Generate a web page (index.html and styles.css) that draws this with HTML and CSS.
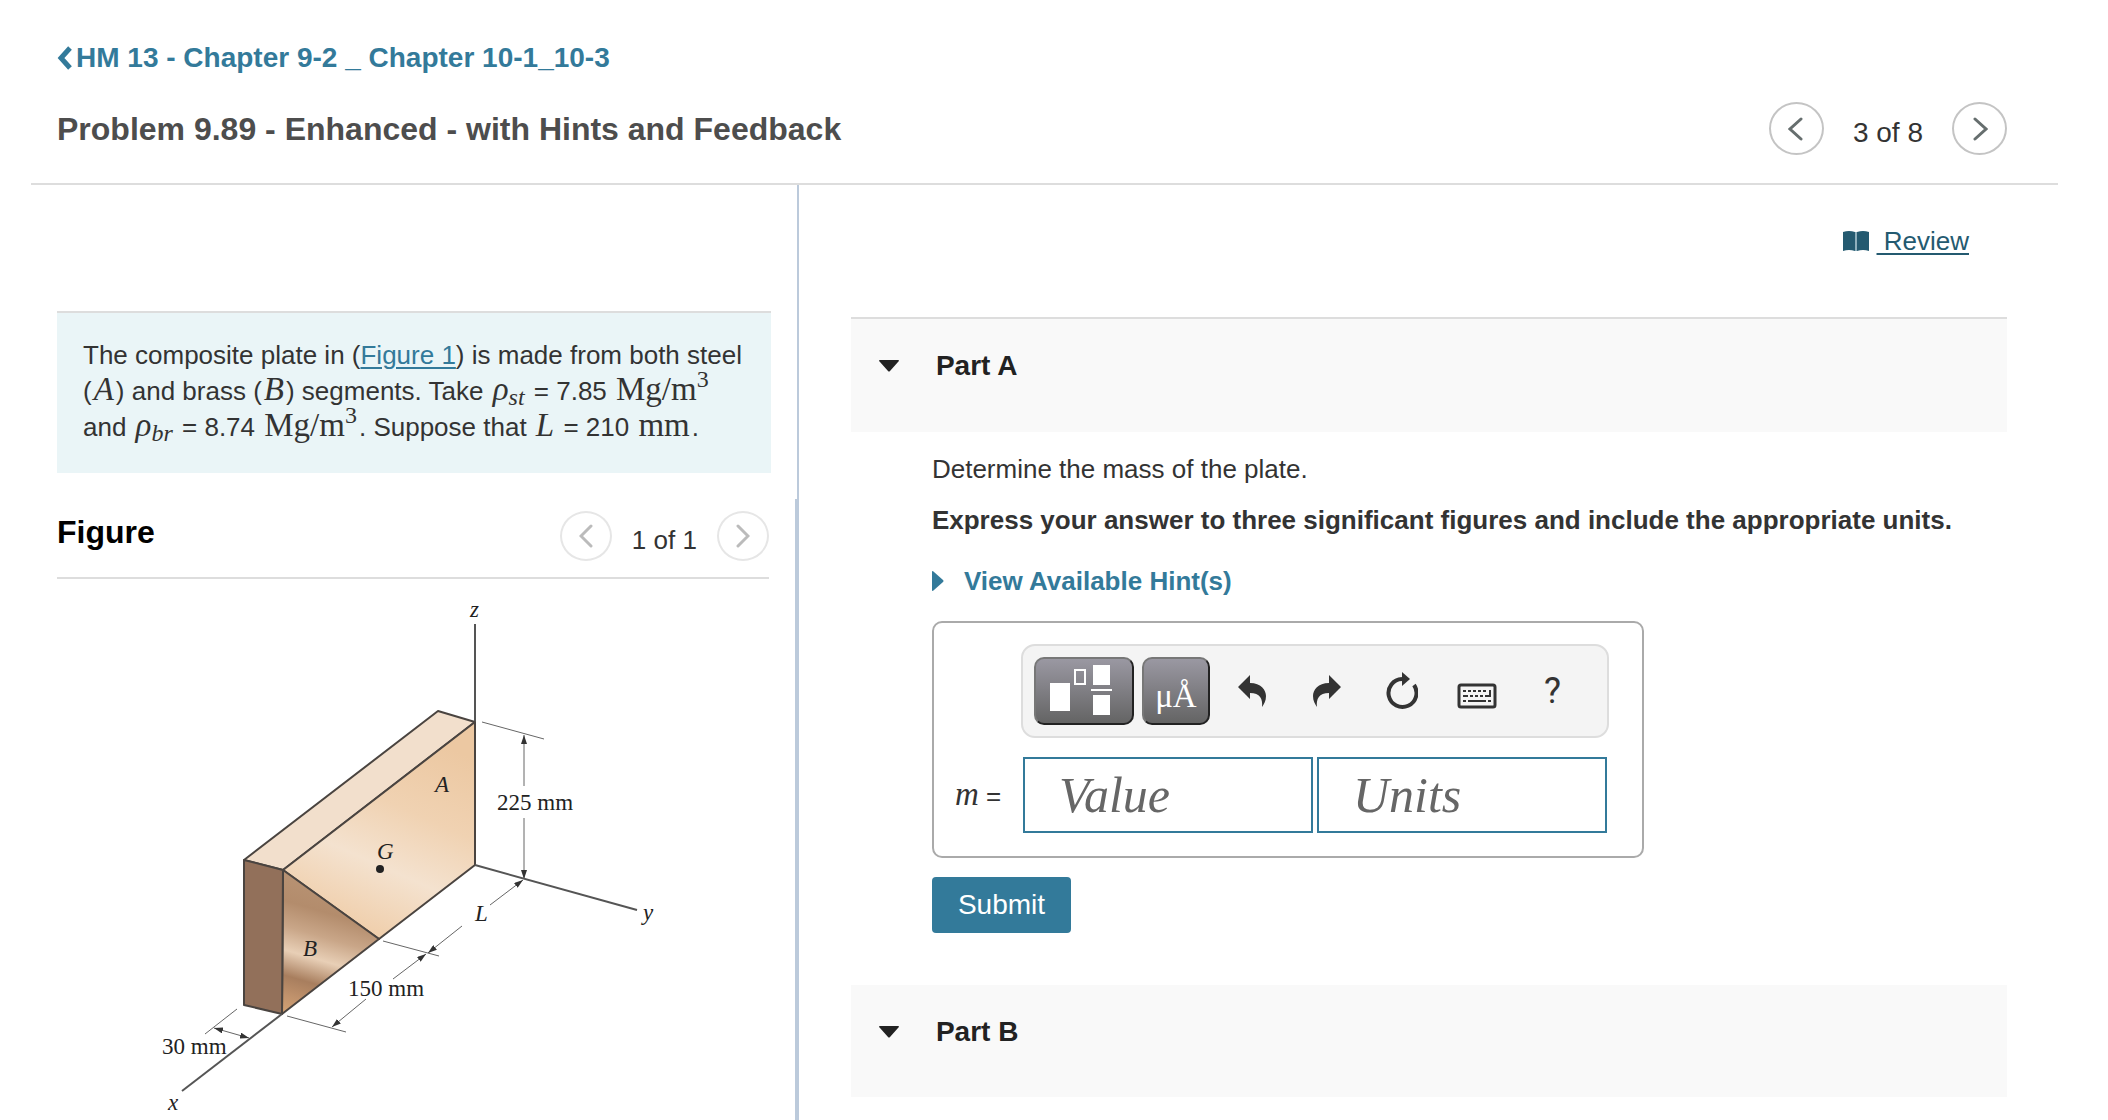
FILE: index.html
```html
<!DOCTYPE html>
<html lang="en">

<head>
    <meta charset="UTF-8">
    <meta name="viewport" content="width=device-width, initial-scale=1.0">
    <title>Problem 9.89 - Enhanced - with Hints and Feedback</title>
    <link rel="stylesheet" href="styles.css">
</head>

<body>

    <header class="header">
        <a class="back" href="#">
            <svg width="16" height="24" viewBox="0 0 16 24"><path d="M13 2L4 12l9 10" fill="none" stroke="currentColor" stroke-width="5"/></svg>
            <span>HM 13 - Chapter 9-2 _ Chapter 10-1_10-3</span>
        </a>
        <div class="title-row">
            <h1 class="title">Problem 9.89 - Enhanced - with Hints and Feedback</h1>
            <nav class="pager">
                <button class="round" type="button" aria-label="Previous item">
                    <svg width="16" height="24" viewBox="0 0 16 24"><path d="M13 2L2 12l11 10"/></svg>
                </button>
                <span class="pager-text">3 of 8</span>
                <button class="round" type="button" aria-label="Next item">
                    <svg width="16" height="24" viewBox="0 0 16 24"><path d="M3 2l11 10L3 22"/></svg>
                </button>
            </nav>
        </div>
    </header>

    <main class="main">
        <!-- left: problem text and figure -->
        <section class="left">
            <div class="problem">
                The composite plate in (<a href="#figure">Figure 1</a>) is made from both steel
                (<i class="math">A</i>) and brass (<i class="math">B</i>) segments. Take <i class="math rho">ρ<sub>st</sub></i> = 7.85 <span class="math">Mg/m<sup>3</sup></span>
                and <i class="math rho">ρ<sub>br</sub></i> = 8.74 <span class="math">Mg/m<sup>3</sup></span>. Suppose that <i class="math">L</i> = 210 <span class="math">mm</span>.
            </div>

            <div class="figure-area" id="figure">
                <div class="figure-head">
                    <h2 class="figure-title">Figure</h2>
                    <nav class="pager small">
                        <button class="round" type="button" aria-label="Previous figure" disabled>
                            <svg width="14" height="24" viewBox="0 0 14 24"><path d="M12 2L2 12l10 10"/></svg>
                        </button>
                        <span class="pager-text">1 of 1</span>
                        <button class="round" type="button" aria-label="Next figure" disabled>
                            <svg width="14" height="24" viewBox="0 0 14 24"><path d="M2 2l10 10L2 22"/></svg>
                        </button>
                    </nav>
                </div>

                <svg class="figure" width="560" height="540" viewBox="0 0 560 540" role="img" aria-label="Composite plate">
                    <defs>
                        <linearGradient id="steel" gradientUnits="userSpaceOnUse" x1="300" y1="165" x2="200" y2="390">
                            <stop offset="0" stop-color="#ecc8a2"/>
                            <stop offset="0.3" stop-color="#f0d2b2"/>
                            <stop offset="0.55" stop-color="#f4e2cf"/>
                            <stop offset="0.8" stop-color="#f0d0ae"/>
                            <stop offset="1" stop-color="#ecc8a4"/>
                        </linearGradient>
                        <linearGradient id="brass" gradientUnits="userSpaceOnUse" x1="165" y1="290" x2="125" y2="428">
                            <stop offset="0" stop-color="#b99475"/>
                            <stop offset="0.25" stop-color="#b38c6c"/>
                            <stop offset="0.42" stop-color="#c9a688"/>
                            <stop offset="0.58" stop-color="#e8cfb6"/>
                            <stop offset="0.75" stop-color="#a87e5e"/>
                            <stop offset="0.88" stop-color="#c0926c"/>
                            <stop offset="1" stop-color="#d2a274"/>
                        </linearGradient>
                        <marker id="arrow" viewBox="0 0 9 6" refX="9" refY="3" markerWidth="9" markerHeight="6" markerUnits="userSpaceOnUse" orient="auto-start-reverse">
                            <path d="M0 0l9 3-9 3z" fill="#333"/>
                        </marker>
                    </defs>

                    <!-- plate -->
                    <g stroke="#4a4440" stroke-width="2" stroke-linejoin="round">
                        <path d="M104 281L298 132l37 11-192 148z" fill="#f2dfcc"/>
                        <path d="M143 291L335 143v143l-96 74z" fill="url(#steel)"/>
                        <path d="M143 291l96 69-97 75z" fill="url(#brass)"/>
                        <path d="M104 281l39 10-1 144-38-9z" fill="#92705a"/>
                    </g>

                    <!-- axes -->
                    <g class="axis">
                        <path d="M335 45v97"/>
                        <path d="M335 286l162 45"/>
                        <path d="M142 435L42 512"/>
                    </g>

                    <!-- dimension lines -->
                    <g class="dim">
                        <path d="M342 143l62 17M243 362l56 15M147 437l59 16M97 430l-32 25"/>
                        <path d="M384 207v-51" marker-end="url(#arrow)"/>
                        <path d="M384 239v61" marker-end="url(#arrow)"/>
                        <path d="M350 326l33-25" marker-end="url(#arrow)"/>
                        <path d="M322 347l-34 27" marker-end="url(#arrow)"/>
                        <path d="M253 400l33-25" marker-end="url(#arrow)"/>
                        <path d="M226 420l-34 28" marker-end="url(#arrow)"/>
                        <path d="M74 449l35 10" marker-start="url(#arrow)" marker-end="url(#arrow)"/>
                    </g>

                    <circle cx="240" cy="290" r="4" fill="#222"/>
                    <g class="label">
                        <text x="357" y="231">225 mm</text>
                        <text x="208" y="417">150 mm</text>
                        <text x="22" y="475">30 mm</text>
                        <g font-style="italic">
                            <text x="330" y="38">z</text>
                            <text x="503" y="341">y</text>
                            <text x="28" y="531">x</text>
                            <text x="295" y="213">A</text>
                            <text x="237" y="280">G</text>
                            <text x="163" y="377">B</text>
                            <text x="335" y="342">L</text>
                        </g>
                    </g>
                </svg>
            </div>
        </section>

        <!-- right: question parts -->
        <section class="right">
            <div class="review">
                <svg width="26" height="22" viewBox="0 0 26 22"><path d="M0 2q6-2 12 0v19q-6-2-12 0zM14 2q6-2 12 0v19q-6-2-12 0z" fill="#245a70"/><path d="M13 2v19" stroke="#8fb0bd" stroke-width="2"/></svg>
                <a href="#">&nbsp;Review</a>
            </div>

            <div class="part part-a">
                <button class="part-head" type="button">
                    <svg width="20" height="12" viewBox="0 0 20 12"><path d="M1 0h18q2 0 0 2l-8 9q-1 1-2 0L1 2q-2-2 0-2z" fill="#222"/></svg>
                    <span>Part A</span>
                </button>
            </div>

            <form class="question">
                <p class="ask">Determine the mass of the plate.</p>
                <p class="ask"><b>Express your answer to three significant figures and include the appropriate units.</b></p>
                <button class="hints" type="button">
                    <svg width="12" height="20" viewBox="0 0 12 20"><path d="M0 1q0-2 2 0l9 8q1 1 0 2l-9 8q-2 2-2 0z" fill="currentColor"/></svg>
                    <span>View Available Hint(s)</span>
                </button>

                <div class="answer">
                    <div class="toolbar">
                        <button class="key key-wide" type="button" aria-label="Templates">
                            <svg width="68" height="54" viewBox="0 0 68 54">
                                <path d="M0 19h20v28H0zM43 1h17v20H43zM43 31h17v20H43zM41 25h21v2H41z" fill="#fff"/>
                                <path d="M25 6h10v14H25z" fill="none" stroke="#fff" stroke-width="2"/>
                            </svg>
                        </button>
                        <button class="key key-text" type="button" aria-label="Symbols">μÅ</button>
                        <button class="tool" type="button" aria-label="Undo">
                            <svg width="28" height="32" viewBox="0 0 28 32"><path d="M0 12L12 0v8c11 0 16 7 16 13 0 5-2 8-4 11 1-8-2-14-12-14v6z"/></svg>
                        </button>
                        <button class="tool" type="button" aria-label="Redo">
                            <svg width="28" height="32" viewBox="0 0 28 32"><path d="M28 12L16 0v8C5 8 0 15 0 21c0 5 2 8 4 11-1-8 2-14 12-14v6z"/></svg>
                        </button>
                        <button class="tool" type="button" aria-label="Reset">
                            <svg width="32" height="38" viewBox="0 0 32 38"><path d="M16 7a14 14 0 1 0 12 6" fill="none" stroke="#333" stroke-width="4"/><path d="M16 0l8 7-8 7z"/></svg>
                        </button>
                        <button class="tool" type="button" aria-label="Keyboard shortcuts">
                            <svg width="40" height="36" viewBox="0 0 40 36">
                                <rect x="2" y="12" width="36" height="22" rx="2" fill="none" stroke="#333" stroke-width="3"/>
                                <path d="M6 18h3M11 18h3M16 18h3M21 18h3M26 18h3" stroke="#333" stroke-width="2"/>
                                <path d="M6 23h5M13 23h3M18 23h3M23 23h3M28 23h5v-6" fill="none" stroke="#333" stroke-width="2"/>
                                <path d="M6 28h3M11 28h18M31 28h3" stroke="#333" stroke-width="2"/>
                            </svg>
                        </button>
                        <button class="tool help" type="button" aria-label="Help">?</button>
                    </div>

                    <label class="symbol" for="value"><i>m</i> =</label>
                    <div class="fields">
                        <input class="field" id="value" type="text" placeholder="Value">
                        <input class="field" type="text" placeholder="Units" aria-label="Units">
                    </div>
                </div>

                <button class="submit" type="submit">Submit</button>
            </form>

            <div class="part">
                <button class="part-head" type="button">
                    <svg width="20" height="12" viewBox="0 0 20 12"><path d="M1 0h18q2 0 0 2l-8 9q-1 1-2 0L1 2q-2-2 0-2z" fill="#222"/></svg>
                    <span>Part B</span>
                </button>
            </div>
        </section>
    </main>

</body>

</html>
```
FILE: styles.css
```css
* {
    box-sizing: border-box;
}
body {
    margin: 0;
    height: 100vh;
    display: flex;
    flex-direction: column;
    overflow: hidden;
    font-family: "Liberation Sans", Arial, sans-serif;
    font-size: 26px;
    line-height: 36px;
    color: #333;
    background-color: #fff;
}
button {
    padding: 0;
    border: 0;
    background: none;
    font: inherit;
    color: inherit;
    cursor: pointer;
}
svg {
    display: block;
}

/* header */
.header {
    flex: none;
    margin: 0 50px 0 31px;
    padding: 40px 51px 28px 26px;
    border-bottom: 2px solid #ddd;
}
.back {
    display: inline-flex;
    align-items: center;
    gap: 3px;
    font-size: 28px;
    font-weight: bold;
    color: #337a9a;
    text-decoration: none;
}
.title-row {
    display: flex;
    align-items: center;
    justify-content: space-between;
    margin-top: 23px;
}
.title {
    margin: 0;
    font-size: 32px;
    color: #4d4d4d;
}
.pager {
    display: flex;
    align-items: center;
    gap: 29px;
}
.pager-text {
    padding-top: 8px;
    font-size: 28px;
}
.round {
    display: flex;
    align-items: center;
    justify-content: center;
    width: 55px;
    height: 53px;
    border: 2px solid #c4c4c4;
    border-radius: 50%;
}
.round path {
    fill: none;
    stroke: #666e6e;
    stroke-width: 3;
    stroke-linecap: round;
}

/* two columns */
.main {
    flex: 1;
    min-height: 0;
    display: flex;
}
.left {
    flex: none;
    width: 37.9%;
    display: flex;
    flex-direction: column;
    border-right: 2px solid #bccadb;
}
.problem {
    margin: 126px 26px 0 57px;
    padding: 24px 26px 28px;
    border-top: 2px solid #ddd;
    background-color: #eaf5f7;
}
.problem a {
    color: #337a9a;
    text-underline-offset: 3px;
    text-decoration-thickness: 2px;
}
.math {
    margin: 0 2px;
    font-family: "Liberation Serif", "Times New Roman", serif;
    font-size: 33px;
    line-height: 28px;
}
.math sub,
.math sup {
    font-size: 24px;
    line-height: 12px;
}
.math sub {
    vertical-align: -5px;
}
.math sup {
    vertical-align: 13px;
}
.figure-area {
    flex: 1;
    min-height: 0;
    margin-top: 26px;
    padding: 8px 26px 0 57px;
    overflow: hidden;
    border-right: 2px solid #bccadb;
}
.figure-head {
    display: flex;
    align-items: flex-start;
    justify-content: space-between;
    padding: 4px 0 16px;
    border-bottom: 2px solid #ddd;
}
.figure-title {
    margin: 3px 0 0;
    font-size: 32px;
    color: #000;
}
.small {
    gap: 20px;
}
.small .pager-text {
    font-size: 26px;
}
.small .round {
    width: 52px;
    height: 50px;
    border-color: #e6e6e6;
}
.small .round path {
    stroke: #bbb;
}
.figure {
    margin-left: 83px;
}
.axis {
    stroke: #555;
    stroke-width: 2;
}
.dim {
    stroke: #666;
    stroke-width: 1;
    fill: none;
}
.label {
    font-family: "Liberation Serif", "Times New Roman", serif;
    font-size: 23px;
    fill: #222;
}

/* question column */
.right {
    flex: 1;
    min-width: 0;
    padding: 38px 101px 0 52px;
    overflow: hidden;
}
.review {
    display: flex;
    align-items: center;
    justify-content: flex-end;
    gap: 8px;
    padding-right: 38px;
}
.review a {
    color: #245a70;
    text-underline-offset: 3px;
    text-decoration-thickness: 2px;
}
.part {
    height: 112px;
    background-color: #f9f9f9;
}
.part-a {
    height: 115px;
    margin-top: 58px;
    border-top: 2px solid #ddd;
}
.part-head {
    display: flex;
    align-items: center;
    gap: 37px;
    width: 100%;
    padding: 29px 28px;
    font-size: 28px;
    font-weight: bold;
    color: #222;
}
.question {
    padding: 19px 0 52px 81px;
}
.ask {
    margin: 0 0 15px;
}
.hints {
    display: flex;
    align-items: center;
    gap: 20px;
    margin-top: 25px;
    font-weight: bold;
    color: #337a9a;
}
.answer {
    display: grid;
    grid-template-columns: 74px minmax(0, 1fr);
    row-gap: 19px;
    align-items: center;
    max-width: 712px;
    margin-top: 22px;
    padding: 21px 33px 23px 13px;
    border: 2px solid #aaa;
    border-radius: 10px;
}
.toolbar {
    grid-column: 2;
    display: flex;
    align-items: center;
    height: 94px;
    padding: 0 11px;
    border: 2px solid #ddd;
    border-radius: 14px;
    background-color: #f4f4f4;
}
.key {
    flex: none;
    display: flex;
    align-items: center;
    justify-content: center;
    width: 68px;
    height: 68px;
    margin-right: 8px;
    border: 2px solid #222;
    border-top-color: #777;
    border-left-color: #777;
    border-radius: 10px;
    background: linear-gradient(#9a98a2, #646464);
    color: #fff;
}
.key-wide {
    width: 100px;
}
.key-text {
    margin-right: 5px;
    padding-top: 10px;
    font-family: "Liberation Serif", "Times New Roman", serif;
    font-size: 33px;
}
.tool {
    display: flex;
    align-items: center;
    justify-content: center;
    width: 75px;
    height: 68px;
    fill: #333;
}
.help {
    font-family: Roboto, sans-serif;
    font-size: 36px;
}
.symbol {
    padding-left: 8px;
}
.symbol i {
    font-family: "Liberation Serif", "Times New Roman", serif;
    font-size: 33px;
}
.fields {
    display: flex;
    gap: 4px;
    padding: 0 2px;
}
.field {
    flex: 1;
    min-width: 0;
    height: 76px;
    padding: 0 34px;
    border: 2px solid #337a9a;
    background-color: #fff;
    font-family: "Liberation Serif", "Times New Roman", serif;
    font-size: 50px;
    font-style: italic;
    color: #333;
}
.field::placeholder {
    color: #666;
}
.submit {
    margin-top: 19px;
    padding: 10px 26px;
    border-radius: 4px;
    background-color: #337a9a;
    font-size: 28px;
    color: #fff;
}
```
